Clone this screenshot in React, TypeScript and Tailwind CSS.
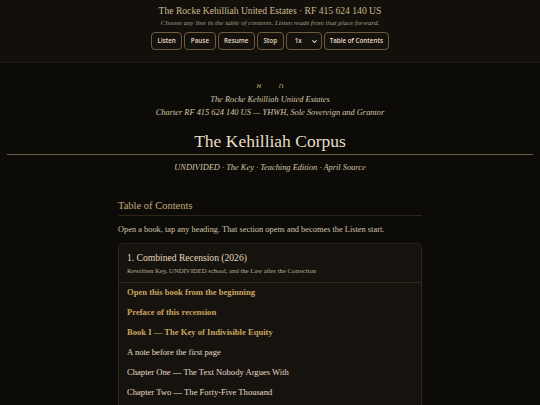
const serif = "font-['Liberation_Serif','DejaVu_Serif',serif]";

const controls = ["Listen", "Pause", "Resume", "Stop"];

const entries: { label: string; lead?: boolean }[] = [
  { label: "Open this book from the beginning", lead: true },
  { label: "Preface of this recension", lead: true },
  { label: "Book I — The Key of Indivisible Equity", lead: true },
  { label: "A note before the first page" },
  { label: "Chapter One — The Text Nobody Argues With" },
  { label: "Chapter Two — The Forty-Five Thousand" },
];

function ControlBar() {
  return (
    <header className="h-[63px] bg-[#13100c] border-b border-[#1c1913] flex flex-col items-center pt-[4px]">
      <div className={`${serif} text-[9.6px] leading-[13px] text-[#cdb88e]`}>
        The Rocke Kehilliah United Estates · RF 415 624 140 US
      </div>
      <div className={`${serif} italic text-[7px] leading-[12px] text-[#a89a82]`}>
        Choose any line in the table of contents. Listen reads from that place forward.
      </div>
      <div className="flex gap-[2px] mt-[3px] font-['Open_Sans',sans-serif] font-semibold text-[6.3px] text-[#e6dcc8]">
        {controls.map((c) => (
          <button
            key={c}
            className="h-[18px] px-[5.5px] rounded-[4px] border border-[#6e5b3d] bg-[#15110c]"
          >
            {c}
          </button>
        ))}
        <div className="h-[18px] w-[36px] rounded-[4px] border border-[#6e5b3d] bg-[#15110c] flex items-center justify-between pl-[8px] pr-[3px]">
          <span>1x</span>
          <svg width="7" height="7" viewBox="0 0 10 10" fill="none" stroke="#e6dcc8" strokeWidth="1.6">
            <path d="M2 3.5l3 3 3-3" />
          </svg>
        </div>
        <button className="h-[18px] px-[5px] rounded-[4px] border border-[#6e5b3d] bg-[#15110c]">
          Table of Contents
        </button>
      </div>
    </header>
  );
}

function TitleBlock() {
  return (
    <section className={`${serif} flex flex-col items-center pt-[18px]`}>
      <div className="flex gap-[17px] text-[8px] leading-[10px] text-[#c9ab70] font-['DejaVu_Sans',sans-serif]">
        <span>א</span>
        <span>ה</span>
      </div>
      <div className="italic text-[8.4px] leading-[13px] mt-[2px] text-[#d3c5a6]">
        The Rocke Kehilliah United Estates
      </div>
      <div className="italic text-[8.4px] leading-[13px] text-[#d3c5a6]">
        Charter RF 415 624 140 US — YHWH, Sole Sovereign and Grantor
      </div>
      <h1 className="text-[17.5px] leading-[24px] mt-[10px] text-[#e9dfc6]">The Kehilliah Corpus</h1>
      <div className="w-[526px] h-px bg-[#6f5e43] mt-[1px]" />
      <div className="italic text-[8.4px] leading-[13px] mt-[6px] text-[#d3c5a6]">
        UNDIVIDED · The Key · Teaching Edition · April Source
      </div>
    </section>
  );
}

function Contents() {
  return (
    <section className={`${serif} w-[304px] mx-auto mt-[24px]`}>
      <h2 className="text-[10.5px] leading-[16px] text-[#c4a874] pb-[1px] border-b border-[#2a241b]">
        Table of Contents
      </h2>
      <p className="text-[8.4px] leading-[13px] mt-[7px] text-[#cfc3a9]">
        Open a book, tap any heading. That section opens and becomes the Listen start.
      </p>
      <div className="mt-[7px] rounded-[5px] border border-[#2b251c] bg-[#16130f]">
        <div className="px-[8px] pt-[7px] pb-[6px] border-b border-[#2e281e]">
          <div className="text-[9.6px] leading-[13px] text-[#e4d8bd]">
            1. Combined Recension (2026)
          </div>
          <div className="text-[6.7px] leading-[11px] mt-[1px] text-[#b9ad94]">
            Rewritten Key, UNDIVIDED school, and the Law after the Correction
          </div>
        </div>
        <ul className="px-[8px] -mt-px pb-[20px]">
          {entries.map((e) => (
            <li
              key={e.label}
              className={
                e.lead
                  ? "h-[20px] flex items-center text-[8.6px] font-bold text-[#caa35f]"
                  : "h-[20px] flex items-center text-[8.6px] text-[#e6dcc6]"
              }
            >
              {e.label}
            </li>
          ))}
        </ul>
      </div>
    </section>
  );
}

export default function App() {
  return (
    <div className="w-[540px] h-[405px] overflow-hidden bg-[#0d0b08]">
      <ControlBar />
      <TitleBlock />
      <Contents />
    </div>
  );
}
